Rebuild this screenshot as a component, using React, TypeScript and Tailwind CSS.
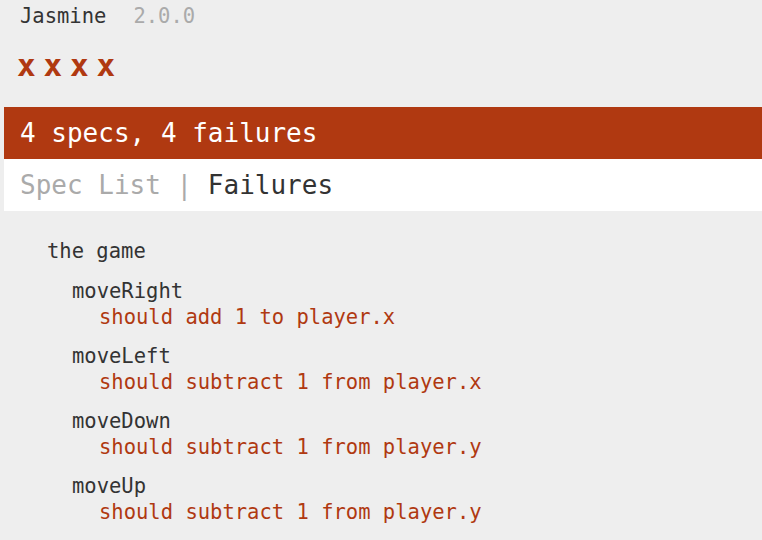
const specs = [
  { name: "moveRight", failure: "should add 1 to player.x" },
  { name: "moveLeft", failure: "should subtract 1 from player.x" },
  { name: "moveDown", failure: "should subtract 1 from player.y" },
  { name: "moveUp", failure: "should subtract 1 from player.y" },
];

export default function App() {
  return (
    <div className="min-h-[540px] bg-[#eeeeee] font-['DejaVu_Sans_Mono',monospace] text-[#333333]">
      <div className="flex pl-[20px] pt-[1px] text-[20.5px] leading-[30px]">
        <span>Jasmine</span>
        <span className="ml-[27px] text-[#aaaaaa]">2.0.0</span>
      </div>

      <ul className="mt-[19px] flex pl-[17px] text-[31px] font-bold leading-[30px] text-[#b03911]">
        {specs.map((s) => (
          <li key={s.name} className="w-[26.5px]">
            x
          </li>
        ))}
      </ul>

      <div className="ml-[4px] mt-[27px] h-[52px] bg-[#b03911] pl-[16px] text-[26px] leading-[52px] text-white">
        4 specs, 4 failures
      </div>
      <div className="ml-[4px] h-[52px] bg-white pl-[16px] text-[26px] leading-[52px]">
        <span className="text-[#aaaaaa]">Spec List | </span>
        <span>Failures</span>
      </div>

      <div className="pl-[47px] pt-[27px] text-[20.5px] leading-[26px]">
        <div>the game</div>
        <div className="mt-[14px] flex flex-col gap-[13px] pl-[25px]">
          {specs.map((s) => (
            <div key={s.name}>
              <div>{s.name}</div>
              <div className="pl-[27px] text-[#b03911]">{s.failure}</div>
            </div>
          ))}
        </div>
      </div>
    </div>
  );
}
